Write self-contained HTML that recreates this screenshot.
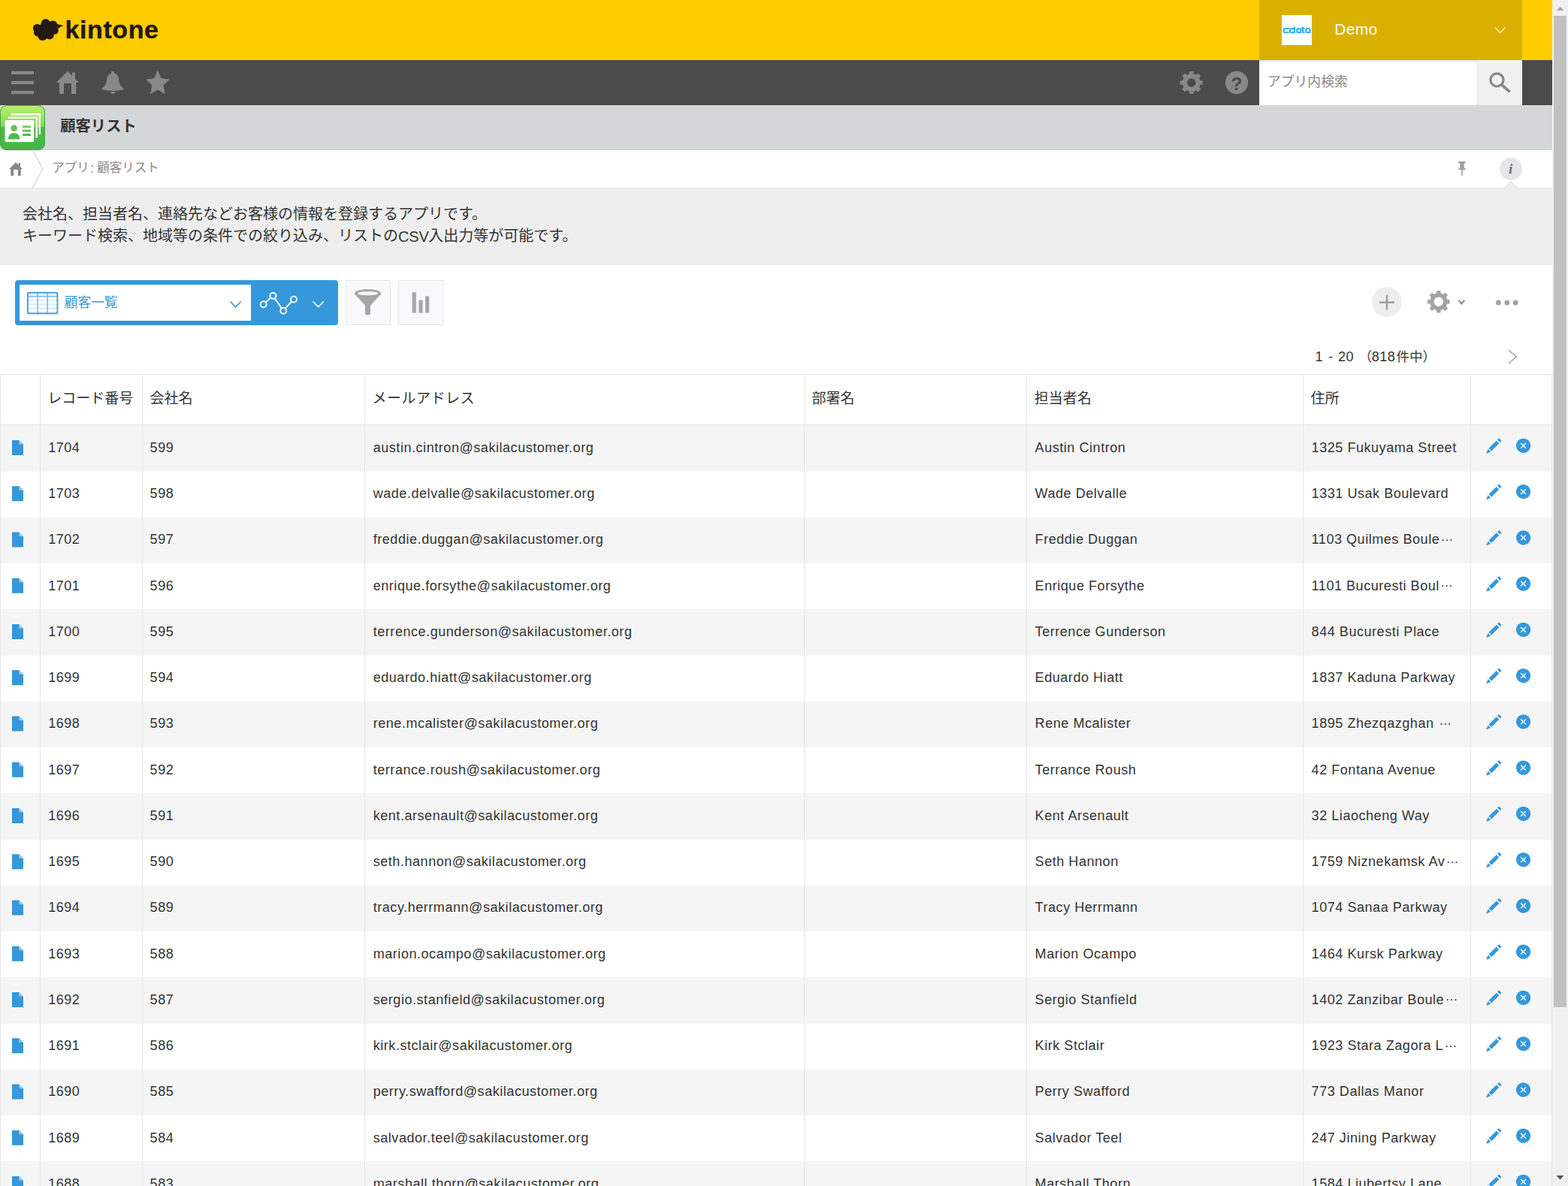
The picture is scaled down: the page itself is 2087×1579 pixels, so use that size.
<!DOCTYPE html>
<html lang="ja"><head><meta charset="utf-8"><title>顧客リスト - kintone</title>
<style>
html,body{margin:0;padding:0}
body{width:2087px;height:1579px;overflow:hidden;background:#fff;position:relative;
 font-family:"Liberation Sans",sans-serif;color:#333;-webkit-font-smoothing:antialiased}
div,span,a,header,nav,section,main{box-sizing:border-box}
.a{position:absolute}
svg.j{position:absolute;display:block;overflow:visible}
svg.i{position:absolute;display:block;overflow:visible;left:0;top:0}
.t{position:absolute;white-space:nowrap}
.jp{font-family:"Liberation Sans","Noto Sans CJK JP",sans-serif}
#hdr{left:0;top:0;width:2066px;height:80px;background:#ffcc00}
#user{left:1676px;top:0;width:350px;height:80px;background:#dab000}
#tb{left:0;top:80px;width:2066px;height:60px;background:#4b4b4b}
#srch{left:1676px;top:0;width:290px;height:60px;background:#fff;box-shadow:inset 0 2px 3px #e0e4e5,inset 1px 0 2px #eef0f1}
#sbtn{left:1966px;top:0;width:60px;height:60px;background:#f0f1f1;border-left:1px solid #e3e7e8}
#ttl{left:0;top:140px;width:2066px;height:60px;background:#d4d7d7}
#bc{left:0;top:200px;width:2066px;height:51px;background:#fff;border-bottom:1px solid #e3e7e8}
#desc{left:0;top:251px;width:2066px;height:102px;background:#eee;border-bottom:1px solid #e3e7e8}
#vt{left:0;top:353px;width:2066px;height:145px}
#sb{left:2066px;top:0;width:21px;height:1579px;background:#f1f1f1}
#sb i{position:absolute;left:2px;top:21px;width:17px;height:1320px;background:#c1c1c1}

#tbl{left:0;top:498px;width:2066px;height:1081px;overflow:hidden}
#tbl .hl{position:absolute;left:0;width:2066px;height:1px;background:#e3e7e8}
#tbl .vl{position:absolute;top:0;width:1px;height:1081px;background:#e3e7e8}
.r{position:absolute;left:0;width:2066px}
.r.o{background:#f5f5f5}
.c{position:absolute;top:0;white-space:nowrap;font:18px/22px "Liberation Sans",sans-serif;letter-spacing:.55px;color:#333}
.c1{left:64.2px}.c2{left:199.6px}.c3{left:496.7px}.c5{left:1377.6px}.c6{left:1745.6px}
.el{letter-spacing:-.3px;margin-left:1.5px;position:relative;top:-.5px;font-size:17px}
.r svg{position:absolute;display:block;overflow:visible;left:0;top:0}
.th{font-size:19px;line-height:19px;color:#333;top:21.72px}
</style></head>
<body>
<svg width="0" height="0" style="position:absolute;width:0;height:0;overflow:hidden" aria-hidden="true"><defs><g id="ic-file"><path d="M16 20H25.4L31 25.6V40H16Z" fill="#3498db"/><path d="M25.4 20V25.6H31Z" fill="#9bcbee"/></g><g id="ic-pen" fill="#3498db" transform="translate(0 1.3)"><path d="M1981.6 29.6L1991.7 19.5L1995.3 23.1L1985.2 33.2Z"/><path d="M1993 18.2L1994.2 17c.5-.5 1.3-.5 1.8 0l1.8 1.8c.5.5.5 1.3 0 1.8L1996.6 21.8Z"/><path d="M1980.6 30.6L1984.2 34.2L1978 36.8Z"/></g><g id="ic-del"><circle cx="2028" cy="28" r="9.6" fill="#000" opacity=".12"/><circle cx="2027.5" cy="27.4" r="9.6" fill="#3498db"/><path d="M2024.1 24L2030.9 30.8M2030.9 24L2024.1 30.8" stroke="#fff" stroke-width="1.4" fill="none"/></g></defs></svg>
<header id="hdr" class="a"><svg class="i" width="2066" height="80" viewBox="0 0 2066 80"><g fill="#231815"><circle cx="61.4" cy="40.6" r="10.8"/><circle cx="60.8" cy="31.4" r="6.2"/><circle cx="70.4" cy="33.4" r="6"/><circle cx="49.6" cy="37.6" r="5.7"/><circle cx="50.6" cy="42.8" r="5.8"/><circle cx="56.6" cy="47.8" r="6.2"/><circle cx="66" cy="46.6" r="5.8"/><circle cx="72.4" cy="40.4" r="5.4"/><path d="M74 31.4C78 32.6 81 33.2 84.8 33.9C81.5 34.9 79 36.2 77.6 38.2Z"/></g></svg><span class="t" id="logo" style="left:86.5px;top:22.2px;font:bold 34px/34px 'Liberation Sans',sans-serif;color:#231815;letter-spacing:.6px;-webkit-text-stroke:.35px #231815">kintone</span><div id="user" class="a"><div class="a" style="left:30px;top:20px;width:40px;height:40px;background:#fff"></div><svg class="i" width="350" height="80" viewBox="1676 0 350 80" role="img" aria-label="cdata"><title>cdata</title><g fill="none" stroke="#2fb0f8" stroke-width="2.1" stroke-linecap="round" stroke-linejoin="round"><path d="M1714.9 38H1711Q1708.4 38 1708.4 40.65Q1708.4 43.3 1711 43.3H1714.9"/><path d="M1723 36.2V43.3H1719.4Q1716.8 43.3 1716.8 40.65Q1716.8 38 1719.4 38H1723"/><path d="M1731.4 43.3V40.5Q1731.4 38 1728.7 38Q1725.9 38 1725.9 40.65Q1725.9 43.3 1728.7 43.3H1731.4"/><path d="M1734 36.2V41.5Q1734 43.3 1735.7 43.3M1732.6 38H1735.8"/><path d="M1743.7 43.3V40.5Q1743.7 38 1740.9 38Q1738 38 1738 40.65Q1738 43.3 1740.9 43.3H1743.7"/></g></svg><span class="t" id="demo" style="left:100.2px;top:27.9px;font:21px/22px 'Liberation Sans',sans-serif;color:#fff;letter-spacing:.35px">Demo</span><svg class="i" width="350" height="80" viewBox="1676 0 350 80"><path d="M1989.8 36.4L1996.7 43.6L2003.6 36.4" fill="none" stroke="#f3e6a6" stroke-width="1.6"/></svg></div></header><nav id="tb" class="a"><div id="srch" class="a"><span class="t jp" style="left:11px;top:20.9px;font-size:17.8px;line-height:17.8px;color:#888">アプリ内検索</span></div><div id="sbtn" class="a"></div><svg class="i" width="2066" height="60" viewBox="0 80 2066 60"><g fill="#888"><rect x="15" y="94.8" width="30" height="4.2"/><rect x="15" y="107.9" width="30" height="4.2"/><rect x="15" y="121" width="30" height="4.2"/><path d="M90 94.7L96 100.8V96.4H99.9V104.8L105 110H101.3V125H95V111H85V125H78.8V110H74.8Z"/><path d="M148.1 95.6c0-.4.3-.6.6-.6h2.8c.4 0 .6.2.6.6V97.4C155.6 98.6 157.6 101.4 157.9 104.5C158.3 108 158.6 110.5 159.6 112.6C160.6 114.6 162.6 116 164.3 117.6C164.8 118.4 164.4 119 163.4 119.3C155 121.5 145.2 121.5 136.8 119.3C135.8 119 135.4 118.4 135.9 117.6C137.6 116 139.6 114.6 140.6 112.6C141.6 110.5 141.9 108 142.3 104.5C142.6 101.4 144.6 98.6 148.1 97.4Z"/><path d="M147.2 121.9H153.2C153 123.7 151.8 124.9 150.2 124.9C148.6 124.9 147.4 123.7 147.2 121.9Z"/><path d="M209.9 94.5L214.4 104.6L225 106L217.2 113.6L219.2 124.5L209.9 119.1L200.6 124.5L202.6 113.6L194.8 106L205.4 104.6Z" stroke="#888" stroke-width=".8" stroke-linejoin="round"/></g><g transform="translate(1585.8 110)"><path d="M-2.8 -11.67L-2.5 -14.99L2.5 -14.99L2.8 -11.67L6.27 -10.23L8.84 -12.37L12.37 -8.84L10.23 -6.27L11.67 -2.8L14.99 -2.5L14.99 2.5L11.67 2.8L10.23 6.27L12.37 8.84L8.84 12.37L6.27 10.23L2.8 11.67L2.5 14.99L-2.5 14.99L-2.8 11.67L-6.27 10.23L-8.84 12.37L-12.37 8.84L-10.23 6.27L-11.67 2.8L-14.99 2.5L-14.99 -2.5L-11.67 -2.8L-10.23 -6.27L-12.37 -8.84L-8.84 -12.37L-6.27 -10.23ZM5.8 0A5.8 5.8 0 1 0 -5.8 0A5.8 5.8 0 1 0 5.8 0Z" fill="#888" fill-rule="evenodd"/></g><circle cx="1646" cy="110" r="15.2" fill="#888"/><circle cx="1992.4" cy="106.4" r="8.6" fill="none" stroke="#888" stroke-width="3.2"/><path d="M1998.7 112.9L2009.4 122.2" stroke="#888" stroke-width="3.8" fill="none"/></svg><span class="t" id="help-q" style="left:1638.6px;top:18.6px;font:bold 24.5px/26px 'Liberation Sans',sans-serif;color:#4b4b4b">?</span></nav><section id="ttl" class="a"><svg class="i" width="60" height="60" viewBox="0 0 60 60"><defs><linearGradient id="ag" x1="0" y1="0" x2="0" y2="1"><stop offset="0" stop-color="#bcf26e"/><stop offset="1" stop-color="#82d357"/></linearGradient><linearGradient id="ab" x1="0" y1="0" x2="0" y2="1"><stop offset="0" stop-color="#5fc551"/><stop offset=".5" stop-color="#4fba4c"/><stop offset="1" stop-color="#47b44a"/></linearGradient><clipPath id="ac"><rect x="0" y="0" width="60" height="60" rx="9"/></clipPath></defs><rect x="0" y="0" width="60" height="60" rx="9" fill="url(#ab)"/><g clip-path="url(#ac)"><path d="M0 0H60V28.4C40 30.4 20 30.4 0 28.4Z" fill="url(#ag)"/></g><rect x=".5" y=".5" width="59" height="59" rx="9" fill="none" stroke="#43a843" stroke-width="1"/><path d="M14.8 11H54V39H51.6V13.4H14.8Z" fill="#fff"/><path d="M10.8 15.4H50V43.4H47.6V17.8H10.8Z" fill="#fff"/><rect x="6.6" y="20" width="38.6" height="29" rx="1.5" fill="#fff"/><circle cx="18.6" cy="30.6" r="4.3" fill="#68c257"/><path d="M10.8 45.6c0-5.4 3-8.6 7.8-8.6s7.8 3.2 7.8 8.6Z" fill="#55ba4f"/><rect x="30" y="27.2" width="11" height="3" fill="#7bcf5a"/><rect x="30" y="32.6" width="11" height="3" fill="#68c257"/><rect x="30" y="38" width="11" height="3" fill="#55ba4f"/></svg><span class="t jp" style="left:80.3px;top:17.8px;font-size:20.3px;line-height:20.3px;font-weight:bold;color:#333">顧客リスト</span></section><div id="bc" class="a"><svg class="i" width="2066" height="51" viewBox="0 200 2066 51"><path d="M21 216L24.6 219.7V217H27V222.1L30 225.2H27.7V234H23.8V226H18.2V234H14.3V225.2H12Z" fill="#888"/><path d="M43 199.5L57 225L43 250.5" fill="none" stroke="#dfe2e3" stroke-width="1.8"/><path d="M1941.2 215h9.6v2.2h-2.1v6.4c1.3.4 2.2 1.3 2.4 2.6h-4.3v7.4l-.8 1.2l-.8-1.2v-7.4h-4.3c.2-1.3 1.1-2.2 2.4-2.6v-6.4h-2.1Z" fill="#a0a0a0"/><circle cx="2011" cy="225" r="15" fill="#e3e7e8"/><path d="M2002 251.6L2011 242L2020 251.6Z" fill="#eee"/><path d="M2001.6 251L2011 241.4L2020.4 251" fill="none" stroke="#e1e5e6" stroke-width="1.3"/></svg><span class="t" id="info-i" style="left:2008px;top:13.6px;font:italic bold 19px/22px 'Liberation Serif',serif;color:#707070">i</span><span class="t jp" style="left:69.2px;top:15.2px;font-size:16.5px;line-height:16.5px;color:#888">アプリ</span><span class="t" style="left:120.2px;top:14.2px;font:17.5px/20px 'Liberation Sans',sans-serif;color:#888">:</span><span class="t jp" style="left:129.3px;top:15.2px;font-size:16.5px;line-height:16.5px;color:#888">顧客リスト</span></div><section id="desc" class="a"><span class="t jp" style="left:30px;top:23.7px;font-size:20px;line-height:20px;color:#333">会社名、担当者名、連絡先などお客様の情報を登録するアプリです。</span><span class="t jp" style="left:30px;top:53.4px;font-size:20px;line-height:20px;color:#333">キーワード検索、地域等の条件での絞り込み、リストの</span><span class="t" id="csv" style="left:530px;top:52.4px;font:20px/24px 'Liberation Sans',sans-serif;color:#333;letter-spacing:-.2px">CSV</span><span class="t jp" style="left:570.3px;top:53.4px;font-size:20px;line-height:20px;color:#333">入出力等が可能です。</span></section><section id="vt" class="a"><div class="a" style="left:20px;top:20px;width:430px;height:60px;background:#3498db;border-radius:4px"></div><div class="a" style="left:26px;top:26px;width:308px;height:48px;background:#fff;border-radius:1px"></div><div class="a" style="left:460px;top:20px;width:60px;height:60px;background:#f7f9fa;border:1px solid #e3e7e8"></div><div class="a" style="left:530px;top:20px;width:60px;height:60px;background:#f7f9fa;border:1px solid #e3e7e8"></div><div class="a" style="left:1826px;top:29px;width:40px;height:40px;border-radius:50%;background:#eee"></div><span class="t jp" style="left:85.8px;top:41.6px;font-size:17.7px;line-height:17.7px;color:#3498db">顧客一覧</span><svg class="i" width="2066" height="145" viewBox="0 353 2066 145"><rect x="36.8" y="389.6" width="39.6" height="27.8" rx="2" fill="#e1f0fa" stroke="#3498db" stroke-width="1.8"/><g fill="#fff"><rect x="38" y="396" width="37.4" height="2.4"/><rect x="38" y="401.4" width="37.4" height="2.4"/><rect x="38" y="406.8" width="37.4" height="2.4"/><rect x="38" y="412" width="37.4" height="2.4"/></g><g fill="#6bb5e6"><rect x="36.8" y="394.2" width="39.6" height="1.2"/><rect x="49.4" y="390" width="1.4" height="27"/><rect x="62.4" y="390" width="1.4" height="27"/></g><path d="M306.6 401.6L313.6 408.8L320.6 401.6" fill="none" stroke="#3498db" stroke-width="1.5"/><path d="M416.4 401.2L423.6 408.6L430.8 401.2" fill="none" stroke="#fff" stroke-width="1.5"/><g fill="none" stroke="#fff" stroke-width="1.9"><path d="M353.6 402.4L360.4 396.2M365.8 397.4L374.8 410.4M379.8 410.4L388 401.6"/><circle cx="350.7" cy="405.2" r="4"/><circle cx="363.4" cy="393.8" r="4"/><circle cx="377.2" cy="413.8" r="4"/><circle cx="391" cy="398.6" r="4"/></g><path d="M472 390.6c0-3.2 8-5.6 17.6-5.6s17.6 2.4 17.6 5.6c0 1-.6 1.8-1.6 2.6L493 406.4V417c0 1.6-1.6 2.6-3.5 2.6s-3.5-1-3.5-2.6V406.4L473.6 393.2c-1-.8-1.6-1.6-1.6-2.6Z" fill="#a6a6a6"/><ellipse cx="489.6" cy="390.6" rx="13.6" ry="2.7" fill="#f4f5f5"/><g fill="#a8a8a8"><rect x="548.6" y="389" width="5.2" height="27.6"/><rect x="557.4" y="399.5" width="5.2" height="17.1"/><rect x="566" y="394.2" width="5.2" height="22.4"/></g><path d="M1836 402.4H1856M1846 392.4V412.4" stroke="#a0a0a0" stroke-width="2.5" fill="none"/><g transform="translate(1914.8 401.7)"><path d="M-2.75 -11.47L-2.46 -14.8L2.46 -14.8L2.75 -11.47L6.17 -10.06L8.72 -12.2L12.2 -8.72L10.06 -6.17L11.47 -2.75L14.8 -2.46L14.8 2.46L11.47 2.75L10.06 6.17L12.2 8.72L8.72 12.2L6.17 10.06L2.75 11.47L2.46 14.8L-2.46 14.8L-2.75 11.47L-6.17 10.06L-8.72 12.2L-12.2 8.72L-10.06 6.17L-11.47 2.75L-14.8 2.46L-14.8 -2.46L-11.47 -2.75L-10.06 -6.17L-12.2 -8.72L-8.72 -12.2L-6.17 -10.06ZM6.2 0A6.2 6.2 0 1 0 -6.2 0A6.2 6.2 0 1 0 6.2 0Z" fill="#a3a3a3" fill-rule="evenodd"/></g><path d="M1941.6 399.6L1945.4 404.4L1949.2 399.6" fill="none" stroke="#888" stroke-width="2"/><g fill="#a3a3a3"><circle cx="1994.4" cy="403" r="3.4"/><circle cx="2005.8" cy="403" r="3.4"/><circle cx="2017.2" cy="403" r="3.4"/></g><path d="M2008 466.2L2018.4 475L2008 483.8" fill="none" stroke="#a8a8a8" stroke-width="1.6"/></svg><span class="t" id="pg1" style="left:1750.6px;top:110.6px;font:18px/22px 'Liberation Sans',sans-serif;color:#333;letter-spacing:.5px">1</span><span class="t" id="pg2" style="left:1768px;top:110.6px;font:18px/22px 'Liberation Sans',sans-serif;color:#333;letter-spacing:.5px">-</span><span class="t" id="pg3" style="left:1781px;top:110.6px;font:18px/22px 'Liberation Sans',sans-serif;color:#333;letter-spacing:.5px">20</span><span class="t jp" style="left:1808.4px;top:113.6px;font-size:17.5px;line-height:17.5px;color:#333">（</span><span class="t" id="pg4" style="left:1825.8px;top:110.6px;font:18px/22px 'Liberation Sans',sans-serif;color:#333;letter-spacing:.5px">818</span><span class="t jp" style="left:1858.4px;top:113.6px;font-size:17.5px;line-height:17.5px;color:#333">件中）</span></section><main id="tbl" class="a" role="table"><div class="r o" role="row" style="top:68px;height:62px"><svg width="2066" height="62" viewBox="0 0.1 2066 62"><use href="#ic-file"/><use href="#ic-pen"/><use href="#ic-del"/></svg><span class="c c1" style="top:18.75px">1704</span><span class="c c2" style="top:18.75px">599</span><span class="c c3" style="top:18.75px">austin.cintron@sakilacustomer.org</span><span class="c c5" style="top:18.75px">Austin Cintron</span><span class="c c6" style="top:18.75px">1325 Fukuyama Street</span></div><div class="r" role="row" style="top:130px;height:61px"><svg width="2066" height="62" viewBox="0 0.85 2066 62"><use href="#ic-file"/><use href="#ic-pen"/><use href="#ic-del"/></svg><span class="c c1" style="top:18px">1703</span><span class="c c2" style="top:18px">598</span><span class="c c3" style="top:18px">wade.delvalle@sakilacustomer.org</span><span class="c c5" style="top:18px">Wade Delvalle</span><span class="c c6" style="top:18px">1331 Usak Boulevard</span></div><div class="r o" role="row" style="top:191px;height:61px"><svg width="2066" height="62" viewBox="0 0.6 2066 62"><use href="#ic-file"/><use href="#ic-pen"/><use href="#ic-del"/></svg><span class="c c1" style="top:18.25px">1702</span><span class="c c2" style="top:18.25px">597</span><span class="c c3" style="top:18.25px">freddie.duggan@sakilacustomer.org</span><span class="c c5" style="top:18.25px">Freddie Duggan</span><span class="c c6" style="top:18.25px">1103 Quilmes Boule<span class="el">&middot;&middot;&middot;</span></span></div><div class="r" role="row" style="top:252px;height:61px"><svg width="2066" height="62" viewBox="0 0.35 2066 62"><use href="#ic-file"/><use href="#ic-pen"/><use href="#ic-del"/></svg><span class="c c1" style="top:18.5px">1701</span><span class="c c2" style="top:18.5px">596</span><span class="c c3" style="top:18.5px">enrique.forsythe@sakilacustomer.org</span><span class="c c5" style="top:18.5px">Enrique Forsythe</span><span class="c c6" style="top:18.5px">1101 Bucuresti Boul<span class="el">&middot;&middot;&middot;</span></span></div><div class="r o" role="row" style="top:313px;height:62px"><svg width="2066" height="62" viewBox="0 0.1 2066 62"><use href="#ic-file"/><use href="#ic-pen"/><use href="#ic-del"/></svg><span class="c c1" style="top:18.75px">1700</span><span class="c c2" style="top:18.75px">595</span><span class="c c3" style="top:18.75px">terrence.gunderson@sakilacustomer.org</span><span class="c c5" style="top:18.75px">Terrence Gunderson</span><span class="c c6" style="top:18.75px">844 Bucuresti Place</span></div><div class="r" role="row" style="top:375px;height:61px"><svg width="2066" height="62" viewBox="0 0.85 2066 62"><use href="#ic-file"/><use href="#ic-pen"/><use href="#ic-del"/></svg><span class="c c1" style="top:18px">1699</span><span class="c c2" style="top:18px">594</span><span class="c c3" style="top:18px">eduardo.hiatt@sakilacustomer.org</span><span class="c c5" style="top:18px">Eduardo Hiatt</span><span class="c c6" style="top:18px">1837 Kaduna Parkway</span></div><div class="r o" role="row" style="top:436px;height:61px"><svg width="2066" height="62" viewBox="0 0.6 2066 62"><use href="#ic-file"/><use href="#ic-pen"/><use href="#ic-del"/></svg><span class="c c1" style="top:18.25px">1698</span><span class="c c2" style="top:18.25px">593</span><span class="c c3" style="top:18.25px">rene.mcalister@sakilacustomer.org</span><span class="c c5" style="top:18.25px">Rene Mcalister</span><span class="c c6" style="top:18.25px">1895 Zhezqazghan <span class="el">&middot;&middot;&middot;</span></span></div><div class="r" role="row" style="top:497px;height:61px"><svg width="2066" height="62" viewBox="0 0.35 2066 62"><use href="#ic-file"/><use href="#ic-pen"/><use href="#ic-del"/></svg><span class="c c1" style="top:18.5px">1697</span><span class="c c2" style="top:18.5px">592</span><span class="c c3" style="top:18.5px">terrance.roush@sakilacustomer.org</span><span class="c c5" style="top:18.5px">Terrance Roush</span><span class="c c6" style="top:18.5px">42 Fontana Avenue</span></div><div class="r o" role="row" style="top:558px;height:62px"><svg width="2066" height="62" viewBox="0 0.1 2066 62"><use href="#ic-file"/><use href="#ic-pen"/><use href="#ic-del"/></svg><span class="c c1" style="top:18.75px">1696</span><span class="c c2" style="top:18.75px">591</span><span class="c c3" style="top:18.75px">kent.arsenault@sakilacustomer.org</span><span class="c c5" style="top:18.75px">Kent Arsenault</span><span class="c c6" style="top:18.75px">32 Liaocheng Way</span></div><div class="r" role="row" style="top:620px;height:61px"><svg width="2066" height="62" viewBox="0 0.85 2066 62"><use href="#ic-file"/><use href="#ic-pen"/><use href="#ic-del"/></svg><span class="c c1" style="top:18px">1695</span><span class="c c2" style="top:18px">590</span><span class="c c3" style="top:18px">seth.hannon@sakilacustomer.org</span><span class="c c5" style="top:18px">Seth Hannon</span><span class="c c6" style="top:18px">1759 Niznekamsk Av<span class="el">&middot;&middot;&middot;</span></span></div><div class="r o" role="row" style="top:681px;height:61px"><svg width="2066" height="62" viewBox="0 0.6 2066 62"><use href="#ic-file"/><use href="#ic-pen"/><use href="#ic-del"/></svg><span class="c c1" style="top:18.25px">1694</span><span class="c c2" style="top:18.25px">589</span><span class="c c3" style="top:18.25px">tracy.herrmann@sakilacustomer.org</span><span class="c c5" style="top:18.25px">Tracy Herrmann</span><span class="c c6" style="top:18.25px">1074 Sanaa Parkway</span></div><div class="r" role="row" style="top:742px;height:61px"><svg width="2066" height="62" viewBox="0 0.35 2066 62"><use href="#ic-file"/><use href="#ic-pen"/><use href="#ic-del"/></svg><span class="c c1" style="top:18.5px">1693</span><span class="c c2" style="top:18.5px">588</span><span class="c c3" style="top:18.5px">marion.ocampo@sakilacustomer.org</span><span class="c c5" style="top:18.5px">Marion Ocampo</span><span class="c c6" style="top:18.5px">1464 Kursk Parkway</span></div><div class="r o" role="row" style="top:803px;height:62px"><svg width="2066" height="62" viewBox="0 0.1 2066 62"><use href="#ic-file"/><use href="#ic-pen"/><use href="#ic-del"/></svg><span class="c c1" style="top:18.75px">1692</span><span class="c c2" style="top:18.75px">587</span><span class="c c3" style="top:18.75px">sergio.stanfield@sakilacustomer.org</span><span class="c c5" style="top:18.75px">Sergio Stanfield</span><span class="c c6" style="top:18.75px">1402 Zanzibar Boule<span class="el">&middot;&middot;&middot;</span></span></div><div class="r" role="row" style="top:865px;height:61px"><svg width="2066" height="62" viewBox="0 0.85 2066 62"><use href="#ic-file"/><use href="#ic-pen"/><use href="#ic-del"/></svg><span class="c c1" style="top:18px">1691</span><span class="c c2" style="top:18px">586</span><span class="c c3" style="top:18px">kirk.stclair@sakilacustomer.org</span><span class="c c5" style="top:18px">Kirk Stclair</span><span class="c c6" style="top:18px">1923 Stara Zagora L<span class="el">&middot;&middot;&middot;</span></span></div><div class="r o" role="row" style="top:926px;height:61px"><svg width="2066" height="62" viewBox="0 0.6 2066 62"><use href="#ic-file"/><use href="#ic-pen"/><use href="#ic-del"/></svg><span class="c c1" style="top:18.25px">1690</span><span class="c c2" style="top:18.25px">585</span><span class="c c3" style="top:18.25px">perry.swafford@sakilacustomer.org</span><span class="c c5" style="top:18.25px">Perry Swafford</span><span class="c c6" style="top:18.25px">773 Dallas Manor</span></div><div class="r" role="row" style="top:987px;height:61px"><svg width="2066" height="62" viewBox="0 0.35 2066 62"><use href="#ic-file"/><use href="#ic-pen"/><use href="#ic-del"/></svg><span class="c c1" style="top:18.5px">1689</span><span class="c c2" style="top:18.5px">584</span><span class="c c3" style="top:18.5px">salvador.teel@sakilacustomer.org</span><span class="c c5" style="top:18.5px">Salvador Teel</span><span class="c c6" style="top:18.5px">247 Jining Parkway</span></div><div class="r o" role="row" style="top:1048px;height:62px"><svg width="2066" height="62" viewBox="0 0.1 2066 62"><use href="#ic-file"/><use href="#ic-pen"/><use href="#ic-del"/></svg><span class="c c1" style="top:18.75px">1688</span><span class="c c2" style="top:18.75px">583</span><span class="c c3" style="top:18.75px">marshall.thorn@sakilacustomer.org</span><span class="c c5" style="top:18.75px">Marshall Thorn</span><span class="c c6" style="top:18.75px">1584 Ljubertsy Lane</span></div><div class="r" role="row" style="top:1px;height:66px;background:#fff"><span class="t jp th" style="left:63.2px">レコード番号</span><span class="t jp th" style="left:199.6px">会社名</span><span class="t jp th" style="left:495.6px;letter-spacing:.47px">メールアドレス</span><span class="t jp th" style="left:1080.4px">部署名</span><span class="t jp th" style="left:1376.8px">担当者名</span><span class="t jp th" style="left:1744.6px">住所</span></div><div class="hl" style="top:0"></div><div class="hl" style="top:67px"></div><div class="vl" style="left:0px"></div><div class="vl" style="left:53px"></div><div class="vl" style="left:189px"></div><div class="vl" style="left:485px"></div><div class="vl" style="left:1070px"></div><div class="vl" style="left:1366px"></div><div class="vl" style="left:1734px"></div><div class="vl" style="left:1957px"></div><div class="vl" style="left:2065px"></div></main><div id="sb" class="a"><i></i><svg class="i" width="21" height="1579" viewBox="2066 0 21 1579"><path d="M2071.8 14L2076.5 9L2081.2 14Z" fill="#a3a3a3"/><path d="M2071.6 1565L2081.4 1565L2076.5 1570.4Z" fill="#505050"/></svg></div>
</body></html>
